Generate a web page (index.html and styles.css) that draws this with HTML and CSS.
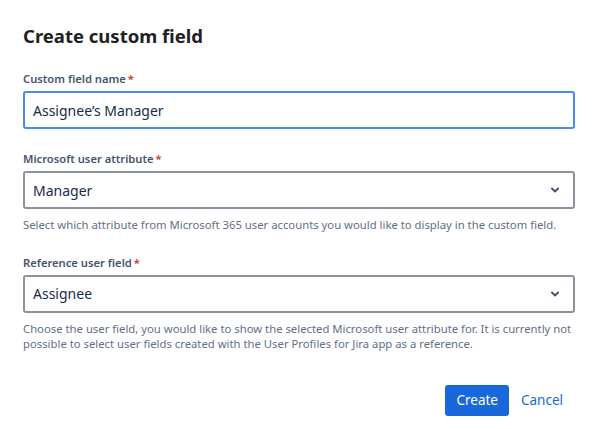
FILE: index.html
```html
<!doctype html>
<html>
<head>
    <meta name="viewport" content="width=device-width, initial-scale=1">
    <link rel="stylesheet" href="styles.css">
</head>
<body>

<div class='dialog'>
    <h1>Create custom field</h1>

    <div class='field first'>
        <label>Custom field name<span class='req'>*</span></label>
        <div class='input focused'>Assignee’s Manager</div>
    </div>

    <div class='field'>
        <label>Microsoft user attribute<span class='req'>*</span></label>
        <div class='input select'>
            <span>Manager</span>
            <svg width='12' height='12' viewBox='0 0 12 12'><path d='M3 4.5 L6 7.5 L9 4.5' fill='none' stroke='#44546f' stroke-width='2' stroke-linecap='round' stroke-linejoin='round'/></svg>
        </div>
        <p class='help'>Select which attribute from Microsoft 365 user accounts you would like to display in the custom field.</p>
    </div>

    <div class='field'>
        <label>Reference user field<span class='req'>*</span></label>
        <div class='input select'>
            <span>Assignee</span>
            <svg width='12' height='12' viewBox='0 0 12 12'><path d='M3 4.5 L6 7.5 L9 4.5' fill='none' stroke='#44546f' stroke-width='2' stroke-linecap='round' stroke-linejoin='round'/></svg>
        </div>
        <p class='help'>Choose the user field, you would like to show the selected Microsoft user attribute for. It is currently not possible to select user fields created with the User Profiles for Jira app as a reference.</p>
    </div>

    <div class='footer'>
        <button class='primary'>Create</button>
        <a href='#' class='cancel'>Cancel</a>
    </div>
</div>

</body>
</html>
```

FILE: styles.css
```css
body {
    margin: 0;
    font-family: "Noto Sans", sans-serif;
    background: #fff;
    color: #172b4d;
}

.dialog {
    padding: 20px 18px 0 23px;
}

h1 {
    margin: 0;
    font-size: 18.5px;
    line-height: 32px;
    font-weight: 700;
    color: #1d2125;
}

.field {
    margin-top: 22px;
}

.field.first {
    margin-top: 19px;
}

label {
    display: block;
    font-size: 11.2px;
    line-height: 16px;
    font-weight: 600;
    color: #44546f;
    margin-bottom: 4px;
}

.req {
    color: #c9372c;
    margin-left: 2px;
}

.input {
    box-sizing: border-box;
    height: 38px;
    border: 2px solid #8c929c;
    border-radius: 3px;
    padding: 0 8px;
    display: flex;
    align-items: center;
    font-size: 14px;
    color: #172b4d;
}

.input.focused {
    border-color: #4a8be8;
}

.select {
    justify-content: space-between;
    padding-right: 12px;
}

.help {
    margin: 8px 0 0;
    font-size: 11.3px;
    line-height: 15.5px;
    color: #626f86;
}

.footer {
    display: flex;
    justify-content: flex-end;
    align-items: center;
    margin-top: 33px;
    padding-right: 12px;
}

.primary {
    height: 31px;
    padding: 0 11px;
    border: none;
    border-radius: 3px;
    background: #1868db;
    color: #fff;
    font-family: inherit;
    font-size: 13.5px;
}

.cancel {
    margin-left: 12px;
    font-size: 13.5px;
    color: #1868db;
    text-decoration: none;
}
```
